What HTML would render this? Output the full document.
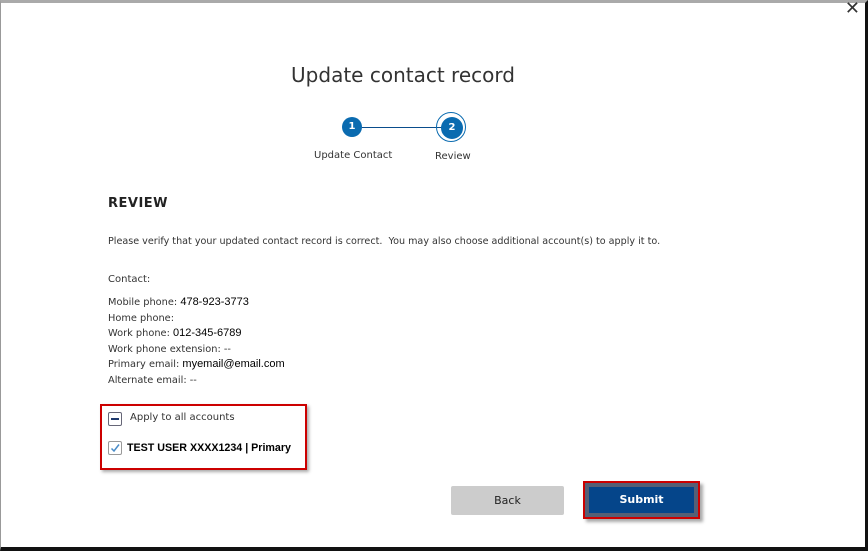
<!DOCTYPE html>
<html><head><style>
body{margin:0;width:868px;height:551px;background:#fff;position:relative;overflow:hidden;font-family:"DejaVu Sans","Liberation Sans",sans-serif;color:#333}
.a{position:absolute;white-space:nowrap}
.frame{position:absolute;left:0;top:0;width:868px;height:551px;box-sizing:border-box;border-top:3px solid #aaa;border-left:1px solid #999;border-right:3px solid #111;border-bottom:4px solid #111}
.c{width:20px;height:20px;border-radius:50%;background:#0a6bb0;color:#fff;font-size:10px;font-weight:bold;text-align:center;line-height:20px}
.s{font-size:10px;color:#333}
.b{font-family:"Liberation Sans",sans-serif;color:#000;font-size:11px}
</style></head><body>
<div class="frame"></div>
<div class="a" style="right:8px;top:-2px;font-size:18px;color:#333">✕</div>
<div class="a" style="left:0;width:806px;text-align:center;top:63px;font-size:20px;color:#333">Update contact record</div>
<div class="a" style="left:362px;top:127px;width:80px;height:1px;background:#0a4d8c"></div>
<div class="a c" style="left:342px;top:117px">1</div>
<div class="a" style="left:436px;top:112px;width:28px;height:28px;border:1px solid #0a6bb0;border-radius:50%"></div>
<div class="a c" style="left:441px;top:117px;width:22px;height:22px;line-height:22px">2</div>
<div class="a s" style="left:314px;top:150px">Update Contact</div>
<div class="a s" style="left:435px;top:151px">Review</div>
<div class="a" style="left:108px;top:196px;font-size:13px;font-weight:600;letter-spacing:0.5px;color:#222">REVIEW</div>
<div class="a" style="left:108px;top:236px;font-size:9.6px">Please verify that your updated contact record is correct.&nbsp; You may also choose additional account(s) to apply it to.</div>
<div class="a s" style="left:108px;top:274px">Contact:</div>
<div class="a s" style="left:108px;top:295px;line-height:15.6px;font-size:9.8px">Mobile phone: <span class="b">478-923-3773</span><br>Home phone:<br>Work phone: <span class="b">012-345-6789</span><br>Work phone extension: --<br>Primary email: <span class="b">myemail@email.com</span><br>Alternate email: --</div>
<div class="a" style="left:100px;top:404px;width:203px;height:62px;border:2px solid #c00;box-shadow:2px 2px 3px #aaa"></div>
<div class="a" style="left:108px;top:412px;width:12px;height:12px;border:1px solid #667;border-radius:2px"><div style="margin:5px 2px;height:2px;background:#1f3a6e"></div></div>
<div class="a s" style="left:130px;top:412px">Apply to all accounts</div>
<div class="a" style="left:108px;top:441px;width:12px;height:12px;border:1px solid #999;border-radius:2px"><svg width="12" height="12" style="position:absolute;left:0;top:0"><path d="M2.5 6.5 L5 9 L10 2.5" stroke="#4a8cc8" stroke-width="1.5" fill="none"/></svg></div>
<div class="a" style="left:127px;top:442px;font-family:'Liberation Sans',sans-serif;font-weight:bold;font-size:10.7px;color:#000">TEST USER XXXX1234 | Primary</div>
<div class="a" style="left:451px;top:486px;width:113px;height:29px;background:#ccc;border-radius:2px;text-align:center;line-height:29px;font-size:11px;color:#222">Back</div>
<div class="a" style="left:583px;top:481px;width:113px;height:34px;border:2px solid #c00;background:#555f75;box-shadow:3px 3px 3px #aaa"><div style="margin:4px;height:26px;background:#05458a;color:#fff;font-weight:bold;font-size:11px;text-align:center;line-height:26px">Submit</div></div>
</body></html>
